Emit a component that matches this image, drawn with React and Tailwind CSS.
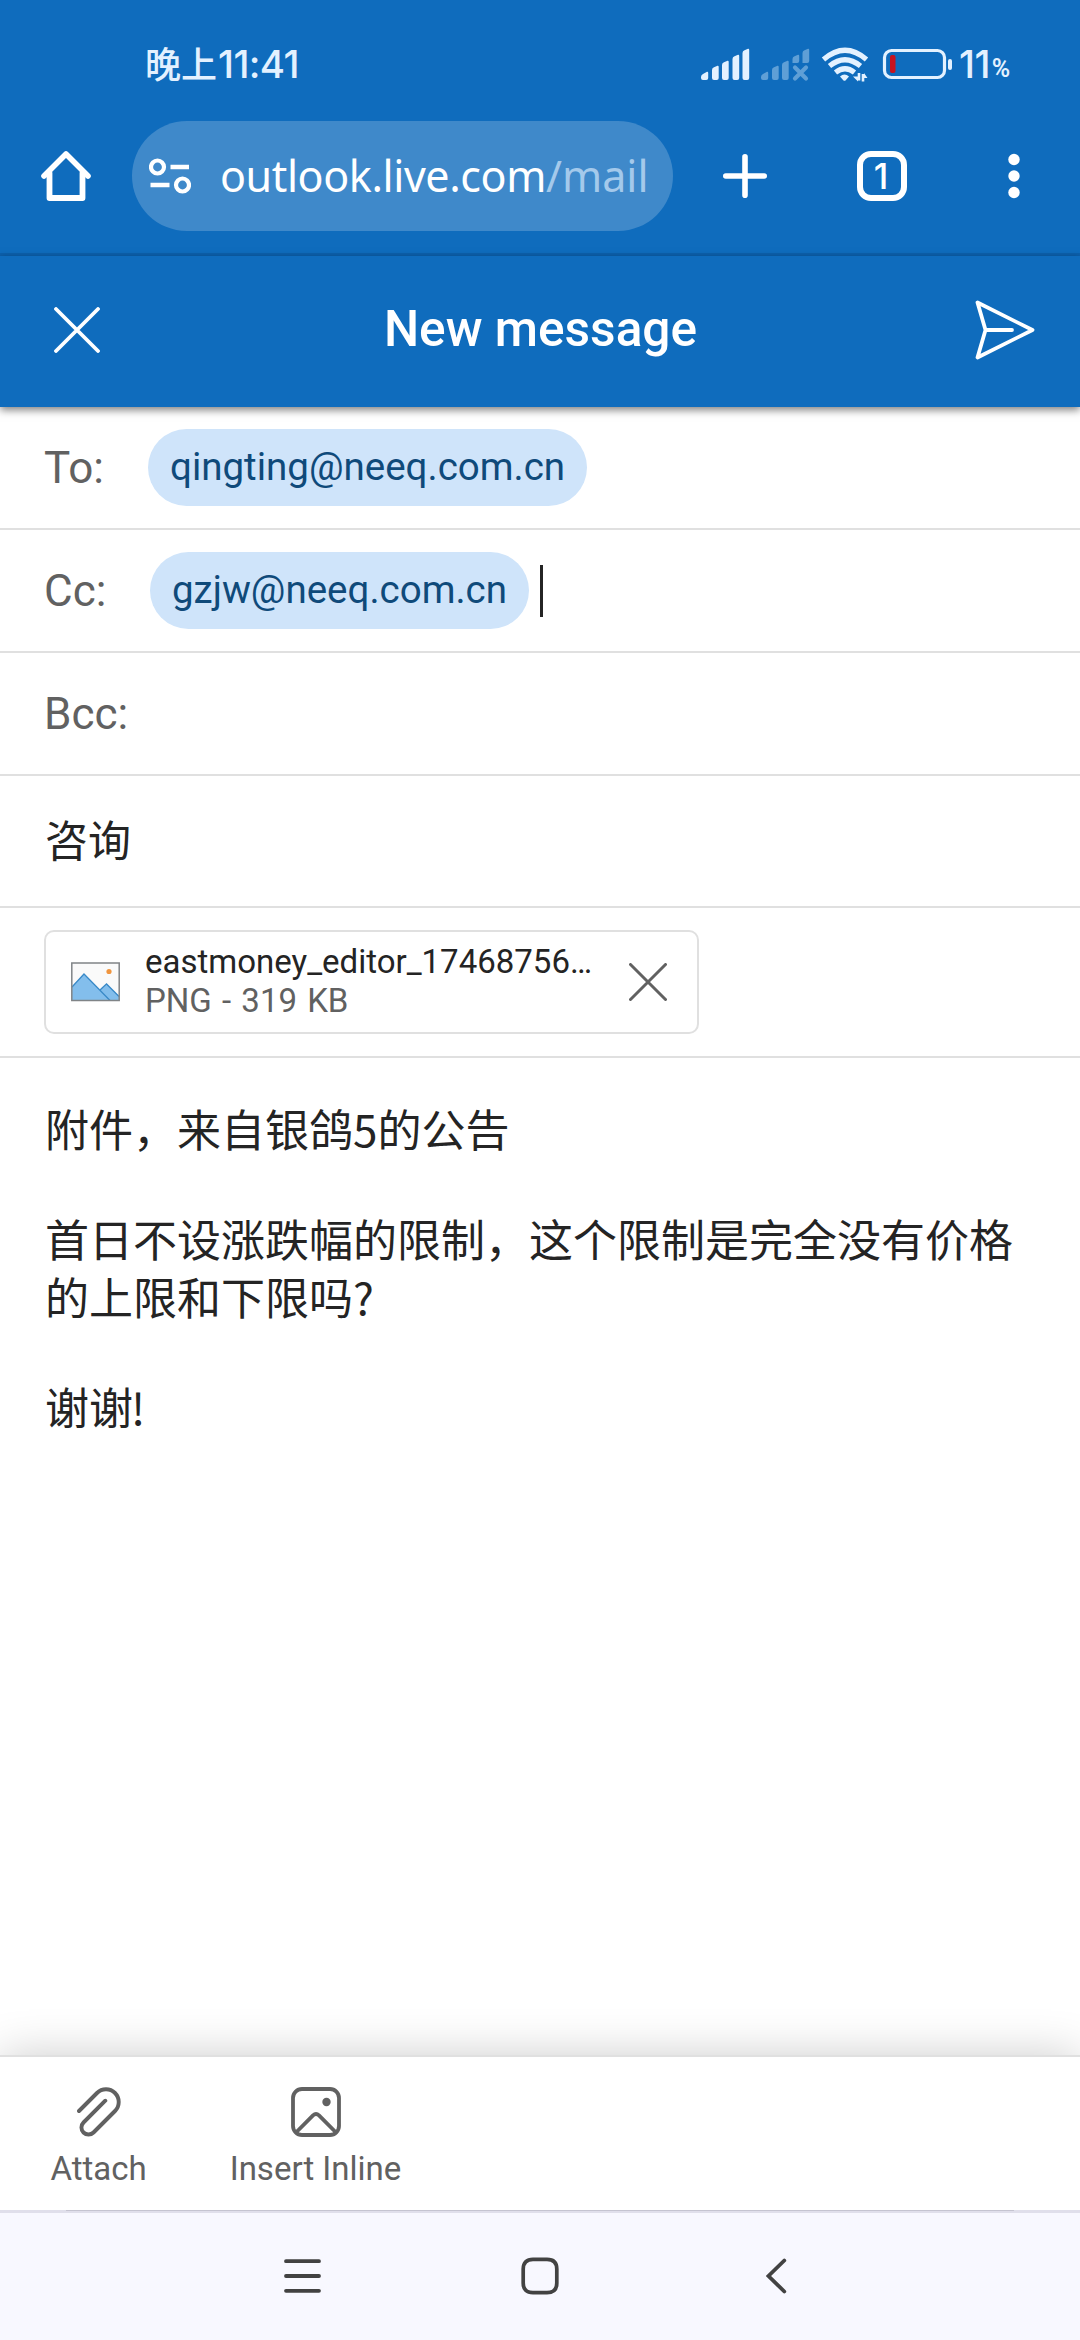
function StatusBar() {
  return (
    <div className="flex h-[121px] items-start bg-[#0f6cbd] pl-[145px] pt-[38px] text-[#e3f1ff]">
      <div className="flex h-[52px] w-[556px] items-start font-['Noto_Sans_CJK_SC',sans-serif] text-[36px] font-medium leading-[49px]">
        <span>晚上</span>
        <span className="pl-[1px] font-[Inter,sans-serif] text-[38.500px] leading-[52px] tracking-[-0.6px]">11:41</span>
      </div>
      <svg className="mt-[7px] h-[42px] w-[252px] shrink-0" viewBox="701 45 252 42" fill="none">
        <g fill="#e3f1ff">
          <path d="M703 80q-2 0-2-2v-1q0-2 2-3l4-2.200q1.200-.3 1.200 1.200v5q0 2-2 2z" />
          <path d="M714 80q-2 0-2-2v-8q0-2 2-2.800l3.500-1.400q1.200-.3 1.200 1.200v11q0 2-2 2z" />
          <path d="M724 80q-2 0-2-2v-13q0-2 2-2.800l3.500-1.400q1.200-.3 1.200 1.200v16q0 2-2 2z" />
          <path d="M734.500 80q-2 0-2-2v-19q0-2 2-2.800l3.500-1.400q1.200-.3 1.200 1.200v22q0 2-2 2z" />
          <path d="M744.500 80q-2 0-2-2v-25q0-2 2-2.800l3.500-1.400q1.200-.3 1.200 1.200v28q0 2-2 2z" />
        </g>
        <g fill="#5f9fd6">
          <path d="M763 80q-2 0-2-2v-1q0-2 2-3l4-2.200q1.200-.3 1.200 1.200v5q0 2-2 2z" />
          <path d="M774 80q-2 0-2-2v-8q0-2 2-2.800l3.500-1.400q1.200-.3 1.200 1.200v11q0 2-2 2z" />
          <path d="M784 80q-2 0-2-2v-13q0-2 2-2.800l3.500-1.400q1.200-.3 1.200 1.200v16q0 2-2 2z" />
          <path d="M792.500 63v-4q0-2 2-2.800l3.500-1.400q1.200-.3 1.200 1.200v5q0 2-2 2z" />
          <path d="M802.500 63v-10q0-2 2-2.800l3.500-1.400q1.200-.3 1.200 1.200v11q0 2-2 2z" />
        </g>
        <path d="M795 67.500l11 11M806 67.500l-11 11" stroke="#5f9fd6" strokeWidth="4.200" strokeLinecap="round" />
        <g stroke="#e3f1ff" strokeWidth="5.200">
          <path d="M823.500 59.500q21.500-18.500 43 0" />
          <path d="M829.500 66q15.500-12.500 31 0" />
          <path d="M835.500 72.500q9.500-7.500 19 0" />
        </g>
        <path d="M840 76.500q4.500-4 9 0l-3.500 3.900q-1 .9-2 0z" fill="#e3f1ff" />
        <path d="M859 73v7.500M863 81.500v-7.500" stroke="#e3f1ff" strokeWidth="2.600" />
        <path d="M853 76.500h5v5zM864 73l3.500 5h-3.500z" fill="#e3f1ff" />
        <rect x="884.500" y="50.500" width="60" height="27" rx="7" stroke="#e3f1ff" strokeWidth="3.200" />
        <rect x="948" y="59" width="4" height="11" rx="2" fill="#e3f1ff" />
        <rect x="890" y="55" width="5.500" height="18" rx="2" fill="#c7131f" />
      </svg>
      <div className="flex h-[52px] items-start pl-[6px] font-[Inter,sans-serif] font-medium leading-[52px]">
        <span className="text-[38.500px] tracking-[-0.6px]">11</span>
        <span className="pl-[2px] pt-[5px] font-[Roboto,sans-serif] text-[25px] font-semibold">%</span>
      </div>
    </div>
  );
}

function BrowserBar() {
  return (
    <div className="flex h-[135px] items-start border-b-[3px] border-[#0c61ae] bg-[#0f6cbd] text-white">
      <div className="flex h-[110px] w-[132px] shrink-0 items-center pl-[41px]">
        <svg className="h-[50px] w-[50px]" viewBox="0 0 50 50" fill="none" stroke="white" strokeLinecap="round" strokeLinejoin="round">
          <path d="M3 25 25 3 47 25" strokeWidth="5.600" />
          <path d="M8.500 22V47h33V22" strokeWidth="5.800" />
        </svg>
      </div>
      <div className="flex h-[110px] w-[541px] shrink-0 items-center rounded-full bg-[#3f89ca] pl-[17px]">
        <svg className="h-[36px] w-[42px] shrink-0" viewBox="0 0 42 36" fill="none" stroke="white">
          <circle cx="8.500" cy="9" r="6.500" strokeWidth="4.200" />
          <circle cx="33.500" cy="27" r="6.500" strokeWidth="4.200" />
          <path d="M21.500 9h18.500M1.500 27h19" strokeWidth="4.400" />
        </svg>
        <div className="whitespace-nowrap pl-[29px] font-['Noto_Sans',sans-serif] text-[43px] leading-[56px]">
          <span className="tracking-[-0.4px]">outlook.live.com</span>
          <span className="text-[#a4c9eb]">/mail</span>
        </div>
      </div>
      <div className="flex h-[110px] w-[407px] items-center pl-[50px]">
        <svg className="h-[44px] w-[44px]" viewBox="0 0 44 44" stroke="white" strokeWidth="5.600" strokeLinecap="round">
          <path d="M22 2.800v38.400M2.800 22h38.400" />
        </svg>
        <div className="ml-[90px] flex h-[50px] w-[50px] items-center justify-center rounded-[14px] border-[6px] border-white pr-[2px] font-[Inter,sans-serif] text-[35px] font-medium leading-[38px]">
          1
        </div>
        <svg className="ml-[101px] h-[46px] w-[12px]" viewBox="0 0 12 46" fill="white">
          <circle cx="6" cy="6.500" r="5.700" />
          <circle cx="6" cy="23" r="5.700" />
          <circle cx="6" cy="39.500" r="5.700" />
        </svg>
      </div>
    </div>
  );
}

function MessageHeader() {
  return (
    <header className="relative z-10 flex h-[151px] items-center justify-between bg-[#0f6cbd] pl-[54px] pr-[45px] pb-[4px] text-white shadow-[0_3px_8px_rgba(0,0,0,0.5)]">
      <svg className="mt-[1px] h-[46px] w-[46px]" viewBox="0 0 46 46" stroke="white" strokeWidth="3.800" strokeLinecap="round">
        <path d="M2 2l42 42M44 2 2 44" />
      </svg>
      <h1 className="pl-[6px] pb-[1px] font-[Roboto,sans-serif] text-[49.600px] font-medium leading-[60px]">New message</h1>
      <svg className="h-[60px] w-[60px]" viewBox="0 0 60 60" fill="none" stroke="white" strokeWidth="3.800" strokeLinejoin="round" strokeLinecap="round">
        <path d="M2.500 2.500 57.500 30 2.500 57.500 10.500 30ZM10.500 30H37" />
      </svg>
    </header>
  );
}

function Recipient({ children }) {
  return (
    <div className="flex h-[77px] items-center rounded-full bg-[#cfe4fa] px-[22px] pb-[2px] text-[38.500px] leading-[46px] text-[#0f4a7a]">
      {children}
    </div>
  );
}

function Field({ label, width, children }) {
  return (
    <div className="flex h-[123px] items-center border-b-2 border-[#e0e0e0] pl-[44px] text-[44px]">
      <div className="shrink-0 leading-[54px] text-[#616161]" style={{ width }}>{label}</div>
      {children}
    </div>
  );
}

function Attachment() {
  return (
    <div className="h-[150px] border-b-2 border-[#e0e0e0] pl-[44px] pt-[22px]">
      <div className="flex h-[104px] w-[655px] items-center rounded-[10px] border-2 border-[#e0e0e0] pl-[25px]">
        <svg className="h-[40px] w-[49px] shrink-0" viewBox="0 0 49 40" fill="none">
          <rect x=".8" y="1" width="47.400" height="37.500" fill="#fafafa" />
          <path d="M1 25 13 12 29 28 36 22 48 34V38.500H1Z" fill="#83beec" />
          <path d="M1 25 13 12 39 38.500M29 28l6.500-6L48 34.500" stroke="#3a8ac8" strokeWidth="1.300" />
          <circle cx="38" cy="9.500" r="2.600" fill="#f0953f" />
          <rect x=".8" y="1" width="47.400" height="37.500" stroke="#808487" strokeWidth="1.500" />
        </svg>
        <div className="w-[509px] shrink-0 whitespace-nowrap pl-[25px] pb-[2px] text-[33px] leading-[39px]">
          <div className="text-[#242424]">eastmoney_editor_17468756…</div>
          <div className="text-[#616161] [word-spacing:2px]">PNG - 319 KB</div>
        </div>
        <svg className="h-[38px] w-[38px] shrink-0" viewBox="0 0 38 38" stroke="#616161" strokeWidth="3" strokeLinecap="round">
          <path d="M1.500 1.500l35 35M36.500 1.500l-35 35" />
        </svg>
      </div>
    </div>
  );
}

function Body() {
  return (
    <main className="flex h-[997px] flex-col gap-[52px] pl-[45px] pt-[41px] font-['Noto_Sans_CJK_SC',sans-serif] text-[44px] leading-[58px] text-[#242424]">
      <p>附件，来自银鸽5的公告</p>
      <p>
        首日不设涨跌幅的限制，这个限制是完全没有价格
        <br />
        的上限和下限吗?
      </p>
      <p>谢谢<span className="-ml-[2px]">!</span></p>
    </main>
  );
}

function Toolbar() {
  return (
    <div className="relative flex h-[155px] border-t-2 border-[#e0e0e0] bg-white pl-[51px] pt-[30px] text-[33px] leading-[40px] text-[#616161] shadow-[0_0_44px_rgba(0,0,0,0.2)]">
      <div className="flex w-[95px] flex-col items-center gap-[12px]">
        <svg className="h-[50px] w-[44px]" viewBox="0 0 44 50" fill="none" stroke="#616161" strokeWidth="3.900" strokeLinecap="round" strokeLinejoin="round">
          <path d="M2 24 20 6A12.700 12.700 0 0 1 38 24L16.500 45.500A7.070 7.070 0 0 1 6.500 35.500L28.300 13.700" />
        </svg>
        <span>Attach</span>
      </div>
      <div className="ml-[84px] flex w-[171px] flex-col items-center gap-[12px] whitespace-nowrap">
        <svg className="h-[50px] w-[50px]" viewBox="0 0 50 50" fill="none" stroke="#616161" strokeWidth="3.800">
          <rect x="2" y="2" width="46" height="46" rx="9" />
          <path d="M5 45.500 22 28.300Q25 25.500 28 28.300L45 45.500" />
          <circle cx="35.500" cy="15" r="4.200" fill="#616161" stroke="none" />
        </svg>
        <span>Insert Inline</span>
      </div>
    </div>
  );
}

function NavigationBar() {
  return (
    <nav className="relative h-[130px] bg-[#f8f8ff]">
      <div className="h-[3px] bg-[#e0dfeb] px-[66px]">
        <div className="h-px bg-[#c5c4d1]" />
      </div>
      <div className="flex h-[125px] items-center pl-[284px]">
        <svg className="h-[38px] w-[37px]" viewBox="0 0 37 38" stroke="#424242" strokeWidth="3.800" strokeLinecap="round">
          <path d="M2 4.200h33M2 19h33M2 33.800h33" />
        </svg>
        <svg className="ml-[200px] h-[38px] w-[38px]" viewBox="0 0 38 38" fill="none" stroke="#424242" strokeWidth="3.700">
          <path d="M12 2.300H26Q35.800 2.300 35.800 12V26Q35.800 35.700 26 35.700H12Q2.200 35.700 2.200 26V12Q2.200 2.300 12 2.300Z" />
        </svg>
        <svg className="ml-[207px] h-[38px] w-[21px]" viewBox="0 0 21 38" fill="none" stroke="#424242" strokeWidth="3.800" strokeLinecap="round">
          <path d="M18.300 3.500 2.500 19 18.300 34.500" />
        </svg>
      </div>
    </nav>
  );
}

export default function App() {
  return (
    <div className="h-[2340px] w-[1080px] overflow-hidden bg-white font-[Roboto,sans-serif]">
      <StatusBar />
      <BrowserBar />
      <MessageHeader />
      <Field label="To:" width={104}>
        <Recipient>qingting@neeq.com.cn</Recipient>
      </Field>
      <Field label="Cc:" width={106}>
        <Recipient>gzjw@neeq.com.cn</Recipient>
        <div className="ml-[11px] h-[52px] w-[3px] bg-[#242424]" />
      </Field>
      <Field label="Bcc:" width={106} />
      <div className="flex h-[132px] items-center border-b-2 border-[#e0e0e0] pl-[45px] pb-[7px] font-['Noto_Sans_CJK_SC',sans-serif] text-[43px] leading-[58px] text-[#242424]">
        咨询
      </div>
      <Attachment />
      <Body />
      <Toolbar />
      <NavigationBar />
    </div>
  );
}
